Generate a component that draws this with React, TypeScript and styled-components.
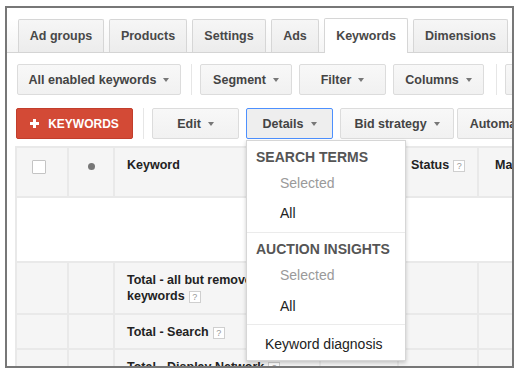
import React from 'react';
import styled, { createGlobalStyle } from 'styled-components';

const GlobalStyle = createGlobalStyle`
  html, body {
    margin: 0;
    padding: 0;
    background: #fff;
  }
  body {
    font-family: "Liberation Sans", Arial, sans-serif;
  }
`;

const Page = styled.div`
  padding: 6px 0 0 5px;
`;

const Frame = styled.div`
  box-sizing: border-box;
  width: 509px;
  height: 362px;
  border: 2px solid #777;
  overflow: hidden;
  background: #fff;
`;

const TabBar = styled.div`
  display: flex;
  align-items: flex-end;
  gap: 5px;
  height: 44px;
  padding-left: 11px;
  border-bottom: 1px solid #d4d4d4;
  background: linear-gradient(#fff 25%, #f4f4f4);
`;

const Tab = styled.div<{ $w: number; $active?: boolean }>`
  box-sizing: border-box;
  flex: none;
  position: relative;
  z-index: ${(p) => (p.$active ? 1 : 0)};
  width: ${(p) => p.$w}px;
  height: ${(p) => (p.$active ? 35 : 33)}px;
  margin-bottom: ${(p) => (p.$active ? -1 : 0)}px;
  display: flex;
  align-items: center;
  justify-content: center;
  border: 1px solid #d6d6d6;
  border-bottom: none;
  border-radius: 2px 2px 0 0;
  background: ${(p) => (p.$active ? '#fff' : 'linear-gradient(#f6f6f6, #ececec)')};
  color: #484848;
  font-size: 12.5px;
  font-weight: bold;
  white-space: nowrap;
`;

const Toolbar = styled.div<{ $top: number; $left: number }>`
  display: flex;
  align-items: center;
  gap: 7px;
  height: 31px;
  margin-top: ${(p) => p.$top}px;
  padding-left: ${(p) => p.$left}px;
  white-space: nowrap;
`;

const Button = styled.div<{ $w: number; $active?: boolean; $ml?: number }>`
  box-sizing: border-box;
  flex: none;
  width: ${(p) => p.$w}px;
  height: 31px;
  margin-left: ${(p) => p.$ml ?? 0}px;
  display: flex;
  align-items: center;
  justify-content: center;
  gap: 7px;
  border: 1px solid ${(p) => (p.$active ? '#4d90fe' : '#dcdcdc')};
  border-radius: 2px;
  background: ${(p) => (p.$active ? '#eeeeee' : 'linear-gradient(#f8f8f8, #f1f1f1)')};
  color: #444;
  font-size: 12.5px;
  font-weight: bold;
`;

const Caret = styled.span`
  width: 0;
  height: 0;
  border-left: 3.5px solid transparent;
  border-right: 3.5px solid transparent;
  border-top: 4px solid #777;
  margin-top: 1px;
`;

const Divider = styled.div<{ $ml?: number }>`
  flex: none;
  width: 1px;
  height: 31px;
  background: #e6e6e6;
  margin: 0 1px 0 ${(p) => p.$ml ?? 3}px;
`;

const AddButton = styled.div`
  box-sizing: border-box;
  flex: none;
  width: 117px;
  height: 31px;
  display: flex;
  align-items: center;
  justify-content: center;
  gap: 9px;
  border: 1px solid #c23e2c;
  border-radius: 2px;
  background: #d34a36;
  color: #fff;
  font-size: 12px;
  font-weight: bold;
`;

const MenuAnchor = styled.div`
  position: relative;
  flex: none;
`;

const Menu = styled.div`
  position: absolute;
  top: 32px;
  left: 0;
  z-index: 5;
  box-sizing: border-box;
  width: 160px;
  padding-top: 4px;
  border: 1px solid #d6d6d6;
  background: #fff;
  box-shadow: 0 2px 4px rgba(0, 0, 0, 0.2);
`;

const MenuHeading = styled.div`
  height: 25px;
  line-height: 25px;
  padding-left: 9px;
  color: #555;
  font-size: 14px;
  font-weight: bold;
`;

const MenuItem = styled.div<{ $h: number; $indent: number; $muted?: boolean }>`
  height: ${(p) => p.$h}px;
  line-height: ${(p) => p.$h}px;
  padding-left: ${(p) => p.$indent}px;
  color: ${(p) => (p.$muted ? '#9a9a9a' : '#222')};
  font-size: 14px;
`;

const MenuRule = styled.div<{ $mt: number; $mb: number }>`
  height: 1px;
  background: #ebebeb;
  margin: ${(p) => p.$mt}px 0 ${(p) => p.$mb}px;
`;

const Grid = styled.table`
  border-collapse: collapse;
  table-layout: fixed;
  width: 560px;
  margin: 7px 0 0 8px;
`;

const Row = styled.tr<{ $h: number; $blank?: boolean }>`
  height: ${(p) => p.$h}px;
  background: ${(p) => (p.$blank ? '#fff' : '#f5f5f5')};
`;

const Cell = styled.td<{ $pl?: number; $center?: boolean; $nowrap?: boolean }>`
  border: 2px solid #e9e9e9;
  padding: 9px 12px 0 ${(p) => p.$pl ?? 12}px;
  vertical-align: top;
  text-align: ${(p) => (p.$center ? 'center' : 'left')};
  color: #222;
  font-size: 12.5px;
  font-weight: bold;
  line-height: 16px;
  overflow: hidden;
  white-space: ${(p) => (p.$nowrap ? 'nowrap' : 'normal')};
`;

const Checkbox = styled.div`
  box-sizing: border-box;
  width: 14px;
  height: 14px;
  margin-top: 3px;
  border: 1px solid #c4c4c4;
  border-radius: 1px;
  background: #fff;
`;

const Dot = styled.div`
  display: inline-block;
  width: 7px;
  height: 7px;
  margin-top: 6px;
  border-radius: 50%;
  background: #777;
`;

const Help = styled.span`
  display: inline-block;
  box-sizing: border-box;
  width: 12px;
  height: 12px;
  margin-left: 4px;
  border: 1px solid #cfcfcf;
  background: #fff;
  color: #999;
  font-size: 9px;
  font-weight: normal;
  line-height: 10px;
  text-align: center;
  vertical-align: middle;
`;

const tabs = [
  { label: 'Ad groups', w: 86 },
  { label: 'Products', w: 78 },
  { label: 'Settings', w: 74 },
  { label: 'Ads', w: 48 },
  { label: 'Keywords', w: 84, active: true },
  { label: 'Dimensions', w: 95 },
];

const totals = ['Total - all but removed keywords', 'Total - Search', 'Total - Display Network'];
const totalHeights = [52, 35, 40];

const PlusIcon = () => (
  <svg width="9" height="9" viewBox="0 0 9 9">
    <rect x="3" y="0" width="3" height="9" fill="#fff" />
    <rect x="0" y="3" width="9" height="3" fill="#fff" />
  </svg>
);

const App = () => (
  <Page>
    <GlobalStyle />
    <Frame>
      <TabBar>
        {tabs.map((t) => (
          <Tab key={t.label} $w={t.w} $active={t.active}>
            {t.label}
          </Tab>
        ))}
      </TabBar>

      <Toolbar $top={11} $left={10}>
        <Button $w={164}>
          All enabled keywords <Caret />
        </Button>
        <Divider />
        <Button $w={92}>
          Segment <Caret />
        </Button>
        <Button $w={87}>
          Filter <Caret />
        </Button>
        <Button $w={91}>
          Columns <Caret />
        </Button>
        <Divider $ml={5} />
        <Button $w={90} />
      </Toolbar>

      <Toolbar $top={13} $left={9}>
        <AddButton>
          <PlusIcon />
          KEYWORDS
        </AddButton>
        <Divider />
        <Button $w={87}>
          Edit <Caret />
        </Button>
        <MenuAnchor>
          <Button $w={87} $active>
            Details <Caret />
          </Button>
          <Menu>
            <MenuHeading>SEARCH TERMS</MenuHeading>
            <MenuItem $h={27} $indent={33} $muted>
              Selected
            </MenuItem>
            <MenuItem $h={32} $indent={33}>
              All
            </MenuItem>
            <MenuRule $mt={3} $mb={4} />
            <MenuHeading>AUCTION INSIGHTS</MenuHeading>
            <MenuItem $h={27} $indent={33} $muted>
              Selected
            </MenuItem>
            <MenuItem $h={34} $indent={33}>
              All
            </MenuItem>
            <MenuRule $mt={1} $mb={3} />
            <MenuItem $h={32} $indent={18}>
              Keyword diagnosis
            </MenuItem>
          </Menu>
        </MenuAnchor>
        <Button $w={114}>
          Bid strategy <Caret />
        </Button>
        <Button $w={96} $ml={-4}>
          Automate <Caret />
        </Button>
      </Toolbar>

      <Grid>
        <colgroup>
          <col width={52} />
          <col width={46} />
          <col width={206} />
          <col width={78} />
          <col width={80} />
          <col width={98} />
        </colgroup>
        <tbody>
          <Row $h={50}>
            <Cell $pl={15}>
              <Checkbox />
            </Cell>
            <Cell $center $pl={12}>
              <Dot />
            </Cell>
            <Cell $nowrap>Keyword</Cell>
            <Cell />
            <Cell $nowrap>
              Status<Help>?</Help>
            </Cell>
            <Cell $nowrap $pl={16}>
              Max. CPC
            </Cell>
          </Row>
          <Row $h={65} $blank>
            <Cell colSpan={6} />
          </Row>
          {totals.map((label, i) => (
            <Row key={label} $h={totalHeights[i]}>
              <Cell />
              <Cell />
              <Cell>
                {label}
                <Help>?</Help>
              </Cell>
              <Cell />
              <Cell />
              <Cell />
            </Row>
          ))}
        </tbody>
      </Grid>
    </Frame>
  </Page>
);

export default App;
